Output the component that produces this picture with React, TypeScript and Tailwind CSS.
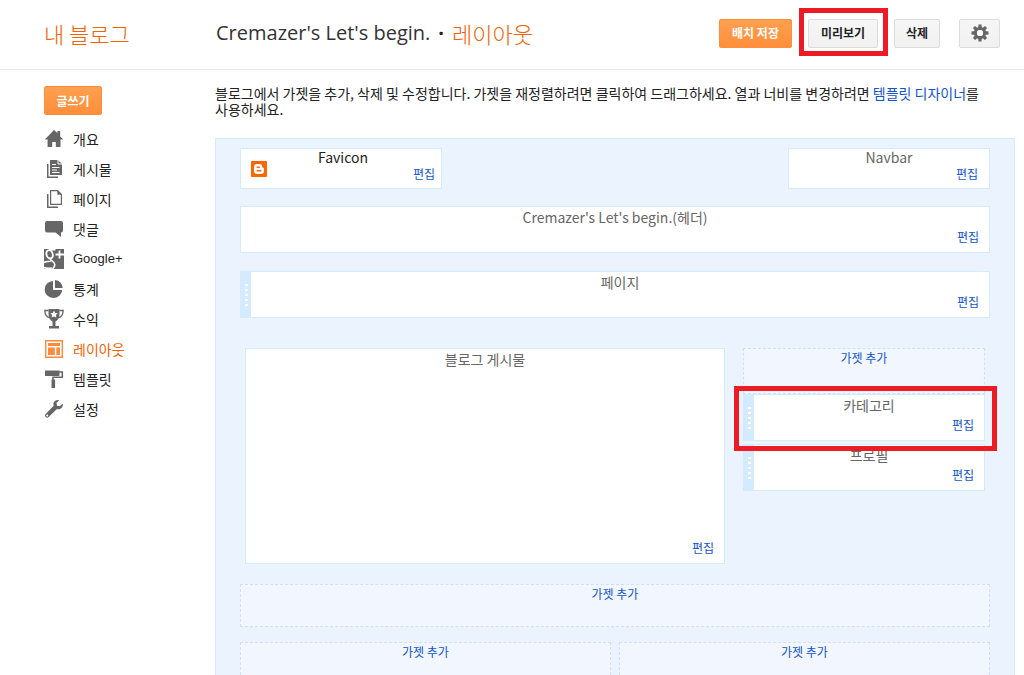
import type { ReactNode } from 'react';

const KR = "font-['Noto_Sans_CJK_KR',sans-serif]";

function Icon({ children, orange }: { children: ReactNode; orange?: boolean }) {
  return (
    <svg
      viewBox="0 0 20 20"
      aria-hidden="true"
      className={orange ? 'size-5 shrink-0 text-[#ff8a3a]' : 'size-5 shrink-0 text-[#666]'}
      fill="currentColor"
    >
      {children}
    </svg>
  );
}

const HomeIcon = () => (
  <Icon>
    <path d="M10 1 .8 10.400h2.800V18h4.600v-5h3.600v5h4.700v-7.600h2.700l-3-3V2h-2.800v2z" />
  </Icon>
);
const PostsIcon = () => (
  <Icon>
    <path d="M3 5h1.500v12.500H14V19H3z" />
    <path d="M6 1h8l4 4v11H6z" />
    <path d="M14 1v4h4M8 5.500h4M8 8.500h7.500M8 11h5M8 13.500h7.500" stroke="#fff" strokeWidth="1" fill="none" />
  </Icon>
);
const PagesIcon = () => (
  <Icon>
    <path d="M3 5h1.500v12.500H14V19H3z" />
    <path d="M6.600 1.600h7l3.800 3.800v10H6.600z" fill="#fff" stroke="currentColor" strokeWidth="1.200" />
    <path d="M13.300 1v4.700H18z" />
  </Icon>
);
const CommentIcon = () => (
  <Icon>
    <path d="M3 2h14a2 2 0 0 1 2 2v7.500a2 2 0 0 1-2 2V18l-5.500-4.500H3a2 2 0 0 1-2-2V4a2 2 0 0 1 2-2z" />
  </Icon>
);
const GooglePlusIcon = () => (
  <Icon>
    <path d="M0 0h20v20H0z" />
    <g fill="none" stroke="#fff">
      <path d="M8.800 5.600c.4 2-.7 3.900-2.500 3.900-1.900 0-3.600-2-3.900-4.300-.3-2.300.9-4.100 2.800-4.100 1.800 0 3.200 2.200 3.600 4.500z" strokeWidth="1.800" />
      <path d="M5 .8h6.500M7 9.500c-2.400 2 3.800 2.500 3.800 6 0 1.600-.8 3-2.300 4.500M0 13.500c2-1.200 4.500-1.300 6.700-1.300M0 18.500c2 1 5 1 8 .5" strokeWidth="1.600" />
      <path d="M15.500 1.500v8M11.500 5.500H20" strokeWidth="1.800" />
    </g>
  </Icon>
);
const StatsIcon = () => (
  <Icon>
    <path d="M9 2v9h9.300A9 9 0 0 1 9.300 19 8.500 8.500 0 0 1 9 2z" />
    <path d="M11 1a8.300 8.300 0 0 1 7.700 8H11z" />
  </Icon>
);
const TrophyIcon = () => (
  <Icon>
    <path d="M4.500 0h11v5c0 4-2 6.500-4 7.500V17h3.500v2.500H5V17h3.500v-4.500c-2-1-4-3.500-4-7.500z" />
    <path d="M4.500 1.500H.8C1 5.500 3 8.500 6 8.700M15.500 1.500h3.700C19 5.500 17 8.500 14 8.700" fill="none" stroke="currentColor" strokeWidth="1.300" />
    <path d="m10 1.500 1.200 2.400 2.600.3-1.900 1.800.5 2.600L10 7.400 7.600 8.600l.5-2.600-1.900-1.800 2.600-.3z" fill="#fff" />
  </Icon>
);
const LayoutIcon = () => (
  <Icon orange>
    <path d="M1.700 1.700h16.600v16.600H1.700z" fill="#fff" stroke="currentColor" strokeWidth="1.400" />
    <path d="M4 4h12v3H4zM4 8.500h6.800V16H4zM12.300 8.500H16V16h-3.700z" />
  </Icon>
);
const TemplateIcon = () => (
  <Icon>
    <path d="M1 1.500h14.500V7H1z" />
    <path d="M15 3h3.300v5.300H9V11" fill="none" stroke="currentColor" strokeWidth="1.600" />
    <path d="M7.500 10.500h3.600V19H7.500z" />
  </Icon>
);
const WrenchIcon = () => (
  <Icon>
    <path d="M18.700 4.500 15.800 7.200 13 6.700l-.5-2.600L15.200 1.200c-2.400-.6-4.600.3-5.500 2.300-.5 1.200-.3 2.300 0 3.300L1.600 15a2.200 2.200 0 0 0 0 3 2.200 2.200 0 0 0 3.100 0l8.300-7.900c1.500.5 3.200.3 4.500-1 1.200-1.200 1.700-3 1.200-4.600zM3.200 17.500a1 1 0 1 1 0-2 1 1 0 0 1 0 2z" />
  </Icon>
);

const TEETH = [0, 45, 90, 135, 180, 225, 270, 315];
const GearIcon = () => (
  <svg viewBox="0 0 18 18" className="size-[18px]" fill="#666" aria-hidden="true">
    {TEETH.map((a) => (
      <path key={a} d="M7.500.5h3l.4 4H7.100z" transform={`rotate(${a} 9 9)`} />
    ))}
    <circle cx="9" cy="9" r="4.600" fill="none" stroke="#666" strokeWidth="3" />
    <circle cx="9" cy="9" r="3" fill="#f8f8f8" />
  </svg>
);
const BloggerIcon = () => (
  <svg viewBox="0 0 16 16" className="size-4" aria-hidden="true">
    <rect width="16" height="16" rx="1" fill="#ff6600" />
    <path
      d="M6 3h2.500A2.700 2.700 0 0 1 11.200 5.700c0 .7.300 1 .9 1 .6 0 .9.300.9.900v2.400a3 3 0 0 1-3 3H6a3 3 0 0 1-3-3V6a3 3 0 0 1 3-3z"
      fill="#fff"
    />
    <path d="M6.200 6.200h2.100M6.200 9.800h3.600" stroke="#ff6600" strokeWidth="1.400" strokeLinecap="round" />
  </svg>
);

const NAV = [
  { label: '개요', icon: <HomeIcon /> },
  { label: '게시물', icon: <PostsIcon /> },
  { label: '페이지', icon: <PagesIcon /> },
  { label: '댓글', icon: <CommentIcon /> },
  { label: 'Google+', icon: <GooglePlusIcon />, latin: true },
  { label: '통계', icon: <StatsIcon /> },
  { label: '수익', icon: <TrophyIcon /> },
  { label: '레이아웃', icon: <LayoutIcon />, active: true },
  { label: '템플릿', icon: <TemplateIcon /> },
  { label: '설정', icon: <WrenchIcon /> },
];

const PRIMARY =
  'h-[29px] rounded-[2px] border border-[#fb8f3d] bg-linear-to-b from-[#ffa04f] to-[#ff8e3b] text-xs font-bold text-white';
const SECONDARY =
  'flex h-[29px] items-center justify-center rounded-[2px] border border-[#dcdcdc] bg-linear-to-b from-[#f6f6f6] to-[#f1f1f1] text-xs font-bold text-[#222]';

function EditLink() {
  return (
    <a href="#edit" className="text-xs leading-4 text-[#1155cc]">
      편집
    </a>
  );
}

function Handle() {
  return (
    <div className="flex w-2.5 shrink-0 cursor-move flex-col items-center gap-[3px] bg-[#d4ebff] pt-3">
      {[0, 1, 2, 3, 4].map((i) => (
        <span key={i} className="h-0.5 w-[3px] bg-white" />
      ))}
    </div>
  );
}

function Gadget({ title, size, handle }: { title: string; size: string; handle?: boolean }) {
  return (
    <section className={`flex border border-[#d4ebff] bg-white ${size}`}>
      {handle && <Handle />}
      <div className="flex flex-1 flex-col items-center justify-between px-2.5 pt-0.5 pb-[7px]">
        <h2 className="text-sm leading-4 text-[#666]">{title}</h2>
        <div className="flex self-end">
          <EditLink />
        </div>
      </div>
    </section>
  );
}

function AddGadget({ size }: { size: string }) {
  return (
    <div className={`flex items-start justify-center border border-dashed border-[#d2defc] bg-[#f2f7ff] pt-px ${size}`}>
      <a href="#add" className="text-xs leading-4 text-[#1155cc]">
        가젯 추가
      </a>
    </div>
  );
}

export default function App() {
  return (
    <div className={`h-screen overflow-hidden bg-white text-[#222] ${KR}`}>
      <header className="flex h-[70px] items-center border-b border-[#ebebeb] pr-6 pb-[3px] pl-11">
        <a href="#blogs" className="w-[172px] text-[22px] leading-7 font-light text-[#f26200]">
          내 블로그
        </a>
        <h1 className="flex flex-1 items-center text-[22px] leading-7 font-light">
          <span className="font-['Open_Sans',sans-serif] text-xl font-normal text-[#333]">Cremazer's Let's begin.</span>
          <span className="px-2 font-['Open_Sans',sans-serif] text-xl font-bold">·</span>
          <span className="text-[#f26200]">레이아웃</span>
        </h1>
        <div className="flex items-center gap-4">
          <button type="button" className={`w-[73px] ${PRIMARY}`}>배치 저장</button>
          <div className="relative">
            <button type="button" className={`w-[70px] ${SECONDARY}`}>미리보기</button>
            <div className="pointer-events-none absolute -top-[11px] -right-2.5 -bottom-2 -left-[9px] border-5 border-[#ed1c24]" />
          </div>
          <button type="button" className={`w-[46px] ${SECONDARY}`}>삭제</button>
          <button type="button" aria-label="설정" className={`ml-[3px] w-[41px] ${SECONDARY}`}>
            <GearIcon />
          </button>
        </div>
      </header>

      <div className="flex">
        <aside className="w-[215px] shrink-0 pt-4 pl-11">
          <button type="button" className={`w-[58px] ${PRIMARY}`}>글쓰기</button>
          <nav className="mt-[9px]">
            <ul>
              {NAV.map((n) => (
                <li key={n.label}>
                  <a
                    href="#nav"
                    className={`flex h-[30px] items-center gap-[9px] text-sm ${n.active ? 'text-[#f26200]' : 'text-[#222]'}`}
                  >
                    {n.icon}
                    <span className={n.latin ? "font-['Liberation_Sans',sans-serif] text-[13px]" : ''}>{n.label}</span>
                  </a>
                </li>
              ))}
            </ul>
          </nav>
        </aside>

        <main className="min-w-0 flex-1 pt-[15px] pr-[9px]">
          <p className="text-sm leading-4 break-keep">
            블로그에서 가젯을 추가, 삭제 및 수정합니다. 가젯을 재정렬하려면 클릭하여 드래그하세요. 열과 너비를 변경하려면{' '}
            <a href="#designer" className="text-[#1155cc]">템플릿 디자이너</a>를 사용하세요.
          </p>

          <div className="mt-[21px] border border-[#d4ebff] bg-[#ebf3ff] px-6 pt-[9px] pb-6">
            <div className="flex justify-between">
              <section className="grid h-[41px] w-[202px] grid-cols-[1fr_auto_1fr] border border-[#d4ebff] bg-white pr-1.5 pl-2.5">
                <div className="self-center">
                  <BloggerIcon />
                </div>
                <h2 className="text-sm leading-4">Favicon</h2>
                <div className="flex self-end justify-self-end pb-1.5">
                  <EditLink />
                </div>
              </section>
              <section className="flex h-[41px] w-[202px] flex-col items-center justify-between border border-[#d4ebff] bg-white px-[11px] pb-1.5">
                <h2 className="text-sm leading-4 text-[#666]">Navbar</h2>
                <div className="flex self-end">
                  <EditLink />
                </div>
              </section>
            </div>

            <div className="mt-[17px] flex flex-col gap-[18px]">
              <Gadget title="Cremazer's Let's begin.(헤더)" size="h-[47px]" />
              <Gadget title="페이지" size="h-[47px]" handle />
            </div>

            <div className="mt-[30px] flex items-start gap-[18px] px-[5px]">
              <Gadget title="블로그 게시물" size="h-[216px] flex-1" />
              <div className="flex w-[242px] flex-col">
                <AddGadget size="h-[46px]" />
                <div className="relative z-10">
                  <Gadget title="카테고리" size="h-[47px]" handle />
                  <div className="pointer-events-none absolute -top-2 -right-3 -bottom-2.5 -left-[9px] border-5 border-[#ed1c24]" />
                </div>
                <div className="mt-[3px]">
                  <Gadget title="프로필" size="h-[47px]" handle />
                </div>
              </div>
            </div>

            <div className="mt-5">
              <AddGadget size="h-[43px]" />
            </div>
            <div className="mt-[15px] grid grid-cols-2 gap-2">
              <AddGadget size="h-[43px]" />
              <AddGadget size="h-[43px]" />
            </div>
          </div>
        </main>
      </div>
    </div>
  );
}
